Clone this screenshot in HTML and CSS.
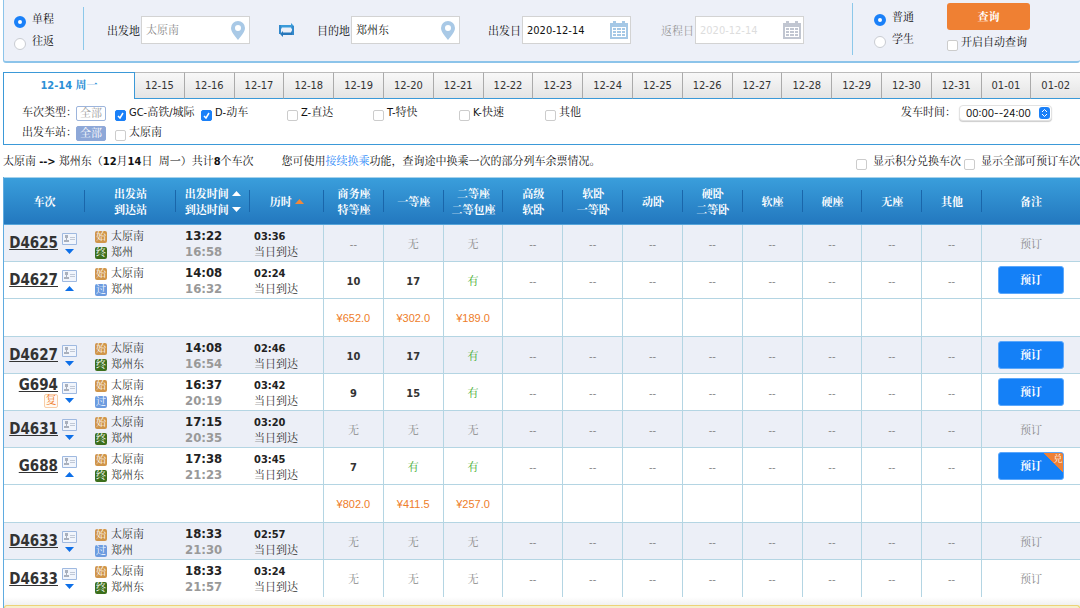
FILE: index.html
```html
<!DOCTYPE html>
<html lang="zh-CN">
<head>
<meta charset="utf-8">
<title>车票查询</title>
<link rel="stylesheet" href="styles.css">
</head>
<body>
<svg class="defs" aria-hidden="true">
  <symbol id="pin" viewBox="0 0 14 19"><path fill="#a9c9e6" fill-rule="evenodd" d="M7 0a7 7 0 0 1 7 7c0 4-4 8-7 12C4 15 0 11 0 7a7 7 0 0 1 7-7zm0 4a3 3 0 1 0 0 6 3 3 0 0 0 0-6z"/></symbol>
  <symbol id="calendar" viewBox="0 0 18 18"><path fill="currentColor" d="M0 2h3V0h3v2h6V0h3v2h3v16H0z"/><path fill="#fff" d="M2 6h14v10H2z"/><path fill="currentColor" d="M3 7h3v2H3zm4 0h4v2H7zm5 0h3v2h-3zM3 10h3v2H3zm4 0h4v2H7zm5 0h3v2h-3zM3 13h3v2H3zm4 0h4v2H7zm5 0h3v2h-3z"/></symbol>
  <symbol id="card" viewBox="0 0 15 12"><path fill="#f1f5fc" stroke="#9fb9e0" d="M.5.5h14v11H.5z"/><path fill="#a9b0bd" d="M3 2h3v3H5v2h2v2H2V7h2V5H3z"/><path fill="#c0c8d6" d="M8 4h5v1H8zm0 2h5v1H8z"/></symbol>
  <symbol id="down" viewBox="0 0 9 5"><path fill="currentColor" d="M0 0h9L4.500 5z"/></symbol>
  <symbol id="up" viewBox="0 0 9 5"><path fill="currentColor" d="M0 5h9L4.500 0z"/></symbol>
</svg>
<main class="page">
  <form class="search">
    <div class="radios">
      <label><input type="radio" name="trip" checked>单程</label>
      <label><input type="radio" name="trip">往返</label>
    </div>
    <div class="rule"></div>
    <div class="field from"><label for="from">出发地</label><span class="box"><input id="from" class="muted" type="text" value="太原南"><svg class="pin"><use href="#pin"/></svg></span></div>
    <button class="swap" type="button" aria-label="交换"><svg viewBox="0 0 16 14"><path fill="#3b9bd9" d="M0 8V2h12V0l3 3-3 3V4.500H3L1 8z"/><path fill="#2878bb" d="M15 5v7H4v2l-3-3 3-3v1.500h8L14 5z"/><path fill="#3288cb" d="M0 2h2v9H0zM13 3h2v9h-2z"/></svg></button>
    <div class="field"><label for="to">目的地</label><span class="box"><input id="to" type="text" value="郑州东"><svg class="pin"><use href="#pin"/></svg></span></div>
    <div class="field depart"><label for="date">出发日</label><span class="box"><input id="date" type="text" value="2020-12-14"><svg class="cal"><use href="#calendar"/></svg></span></div>
    <div class="field depart off"><label for="back">返程日</label><span class="box"><input id="back" type="text" value="2020-12-14" disabled><svg class="cal"><use href="#calendar"/></svg></span></div>
    <div class="rule tall"></div>
    <div class="radios kind">
      <label><input type="radio" name="kind" checked>普通</label>
      <label><input type="radio" name="kind">学生</label>
    </div>
    <div class="submit">
      <button type="button" class="query">查询</button>
      <label class="check"><input type="checkbox">开启自动查询</label>
    </div>
  </form>

  <nav class="tabs">
    <a class="current" href="#">12-14 周一</a>
    <a href="#">12-15</a><a href="#">12-16</a><a href="#">12-17</a><a href="#">12-18</a><a href="#">12-19</a><a href="#">12-20</a><a href="#">12-21</a><a href="#">12-22</a><a href="#">12-23</a><a href="#">12-24</a><a href="#">12-25</a><a href="#">12-26</a><a href="#">12-27</a><a href="#">12-28</a><a href="#">12-29</a><a href="#">12-30</a><a href="#">12-31</a><a href="#">01-01</a><a href="#">01-02</a>
  </nav>

  <section class="filters">
    <div class="filter-rows">
      <div class="filter"><span class="name">车次类型：</span><button type="button" class="all">全部</button>
        <div class="options">
          <label class="check"><input type="checkbox" checked>GC-高铁/城际</label>
          <label class="check"><input type="checkbox" checked>D-动车</label>
          <label class="check"><input type="checkbox">Z-直达</label>
          <label class="check"><input type="checkbox">T-特快</label>
          <label class="check"><input type="checkbox">K-快速</label>
          <label class="check"><input type="checkbox">其他</label>
        </div>
      </div>
      <div class="filter"><span class="name">出发车站：</span><button type="button" class="all on">全部</button>
        <div class="options"><label class="check"><input type="checkbox">太原南</label></div>
      </div>
    </div>
    <div class="when"><label for="when">发车时间：</label>
      <span class="picker"><select id="when"><option>00:00--24:00</option></select><svg viewBox="0 0 11 12"><rect width="11" height="12" rx="3" fill="#1a80f8"/><path d="M3 5l2.500-2.500L8 5M3 7l2.500 2.500L8 7" fill="none" stroke="#fff"/></svg></span>
    </div>
  </section>

  <div class="summary">
    <p>太原南 <b>--&gt;</b> 郑州东（<b>12</b>月<b>14</b>日&nbsp; 周一）共计<b>8</b>个车次</p>
    <p>您可使用<a href="#">接续换乘</a>功能，查询途中换乘一次的部分列车余票情况。</p>
    <div class="toggles">
      <label class="check"><input type="checkbox">显示积分兑换车次</label>
      <label class="check"><input type="checkbox">显示全部可预订车次</label>
    </div>
  </div>

  <table class="trains">
    <colgroup><col class="c-train"><col class="c-station"><col class="c-time"><col class="c-time"><col span="11"><col class="c-book"></colgroup>
    <thead>
      <tr>
        <th>车次</th><th>出发站<br>到达站</th>
        <th>出发时间 <svg class="sort"><use href="#up"/></svg><br>到达时间 <svg class="sort"><use href="#down"/></svg></th>
        <th>历时 <svg class="sort active"><use href="#up"/></svg></th>
        <th>商务座<br>特等座</th><th>一等座</th><th>二等座<br>二等包座</th><th>高级<br>软卧</th><th>软卧<br>一等卧</th><th>动卧</th><th>硬卧<br>二等卧</th><th>软座</th><th>硬座</th><th>无座</th><th>其他</th><th>备注</th>
      </tr>
    </thead>
    <tbody>
      <tr class="alt">
        <td><div class="train"><a href="#">D4625</a><span class="marks"><svg class="card"><use href="#card"/></svg><svg class="arrow"><use href="#down"/></svg></span></div></td>
        <td class="station"><div><i class="start">始</i>太原南</div><div><i class="end">终</i>郑州</div></td>
        <td class="time"><b>13:22</b><b class="arrive">16:58</b></td>
        <td class="span"><b>03:36</b><span>当日到达</span></td>
        <td>--</td><td>无</td><td>无</td><td>--</td><td>--</td><td>--</td><td>--</td><td>--</td><td>--</td><td>--</td><td>--</td><td>预订</td>
      </tr>
      <tr>
        <td><div class="train"><a href="#">D4627</a><span class="marks"><svg class="card"><use href="#card"/></svg><svg class="arrow"><use href="#up"/></svg></span></div></td>
        <td class="station"><div><i class="start">始</i>太原南</div><div><i class="pass">过</i>郑州</div></td>
        <td class="time"><b>14:08</b><b class="arrive">16:32</b></td>
        <td class="span"><b>02:24</b><span>当日到达</span></td>
        <td class="num">10</td><td class="num">17</td><td class="yes">有</td><td>--</td><td>--</td><td>--</td><td>--</td><td>--</td><td>--</td><td>--</td><td>--</td><td class="action"><button type="button" class="book">预订</button></td>
      </tr>
      <tr class="price">
        <td colspan="4"></td><td>¥652.0</td><td>¥302.0</td><td>¥189.0</td><td></td><td></td><td></td><td></td><td></td><td></td><td></td><td></td><td></td>
      </tr>
      <tr class="alt">
        <td><div class="train"><a href="#">D4627</a><span class="marks"><svg class="card"><use href="#card"/></svg><svg class="arrow"><use href="#down"/></svg></span></div></td>
        <td class="station"><div><i class="start">始</i>太原南</div><div><i class="end">终</i>郑州东</div></td>
        <td class="time"><b>14:08</b><b class="arrive">16:54</b></td>
        <td class="span"><b>02:46</b><span>当日到达</span></td>
        <td class="num">10</td><td class="num">17</td><td class="yes">有</td><td>--</td><td>--</td><td>--</td><td>--</td><td>--</td><td>--</td><td>--</td><td>--</td><td class="action"><button type="button" class="book">预订</button></td>
      </tr>
      <tr>
        <td><div class="train"><span class="named"><a href="#">G694</a><span class="fu">复</span></span><span class="marks"><svg class="card"><use href="#card"/></svg><svg class="arrow"><use href="#down"/></svg></span></div></td>
        <td class="station"><div><i class="start">始</i>太原南</div><div><i class="pass">过</i>郑州东</div></td>
        <td class="time"><b>16:37</b><b class="arrive">20:19</b></td>
        <td class="span"><b>03:42</b><span>当日到达</span></td>
        <td class="num">9</td><td class="num">15</td><td class="yes">有</td><td>--</td><td>--</td><td>--</td><td>--</td><td>--</td><td>--</td><td>--</td><td>--</td><td class="action"><button type="button" class="book">预订</button></td>
      </tr>
      <tr class="alt">
        <td><div class="train"><a href="#">D4631</a><span class="marks"><svg class="card"><use href="#card"/></svg><svg class="arrow"><use href="#down"/></svg></span></div></td>
        <td class="station"><div><i class="start">始</i>太原南</div><div><i class="end">终</i>郑州</div></td>
        <td class="time"><b>17:15</b><b class="arrive">20:35</b></td>
        <td class="span"><b>03:20</b><span>当日到达</span></td>
        <td>无</td><td>无</td><td>无</td><td>--</td><td>--</td><td>--</td><td>--</td><td>--</td><td>--</td><td>--</td><td>--</td><td>预订</td>
      </tr>
      <tr>
        <td><div class="train"><a href="#">G688</a><span class="marks"><svg class="card"><use href="#card"/></svg><svg class="arrow"><use href="#up"/></svg></span></div></td>
        <td class="station"><div><i class="start">始</i>太原南</div><div><i class="end">终</i>郑州东</div></td>
        <td class="time"><b>17:38</b><b class="arrive">21:23</b></td>
        <td class="span"><b>03:45</b><span>当日到达</span></td>
        <td class="num">7</td><td class="yes">有</td><td class="yes">有</td><td>--</td><td>--</td><td>--</td><td>--</td><td>--</td><td>--</td><td>--</td><td>--</td><td class="action"><button type="button" class="book">预订<span class="corner">兑</span></button></td>
      </tr>
      <tr class="price">
        <td colspan="4"></td><td>¥802.0</td><td>¥411.5</td><td>¥257.0</td><td></td><td></td><td></td><td></td><td></td><td></td><td></td><td></td><td></td>
      </tr>
      <tr class="alt">
        <td><div class="train"><a href="#">D4633</a><span class="marks"><svg class="card"><use href="#card"/></svg><svg class="arrow"><use href="#down"/></svg></span></div></td>
        <td class="station"><div><i class="start">始</i>太原南</div><div><i class="pass">过</i>郑州</div></td>
        <td class="time"><b>18:33</b><b class="arrive">21:30</b></td>
        <td class="span"><b>02:57</b><span>当日到达</span></td>
        <td>无</td><td>无</td><td>无</td><td>--</td><td>--</td><td>--</td><td>--</td><td>--</td><td>--</td><td>--</td><td>--</td><td>预订</td>
      </tr>
      <tr class="last">
        <td><div class="train"><a href="#">D4633</a><span class="marks"><svg class="card"><use href="#card"/></svg><svg class="arrow"><use href="#down"/></svg></span></div></td>
        <td class="station"><div><i class="start">始</i>太原南</div><div><i class="end">终</i>郑州东</div></td>
        <td class="time"><b>18:33</b><b class="arrive">21:57</b></td>
        <td class="span"><b>03:24</b><span>当日到达</span></td>
        <td>无</td><td>无</td><td>无</td><td>--</td><td>--</td><td>--</td><td>--</td><td>--</td><td>--</td><td>--</td><td>--</td><td>预订</td>
      </tr>
    </tbody>
  </table>
  <footer class="foot"><div class="notice"></div></footer>
</main>
</body>
</html>
```
FILE: styles.css
```css
* { box-sizing: border-box; }
body {
  margin: 0;
  background: #fff;
  color: #111;
  font: 11px/16px "DejaVu Sans Condensed", "Noto Serif CJK SC", "Noto Sans CJK SC", sans-serif;
}
button, input, select { font: inherit; color: inherit; margin: 0; }
button { padding: 0; border: 0; cursor: pointer; }
a { color: inherit; text-decoration: none; }
p { margin: 0; }
.defs { display: none; }
.page { display: flex; flex-direction: column; min-height: 100vh; margin-left: 3px; white-space: nowrap; }

/* search form */
.search {
  display: flex;
  height: 63px;
  padding-left: 10px;
  border: 1px solid #8cc4ea;
  border-width: 0 0 2px 1px;
  border-radius: 0 0 3px 3px;
  background: #edf0f8;
}
.radios { display: flex; flex-direction: column; gap: 6px; padding-top: 12px; width: 69px; }
.radios label { display: flex; align-items: center; gap: 6px; }
.radios input {
  appearance: none;
  width: 12px;
  height: 12px;
  margin-top: 3px;
  border: 1px solid #c9ccd2;
  border-radius: 50%;
  background: #fff;
}
.radios input:checked { border: 4px solid #1a80f8; }
.radios.kind { width: 73px; margin-left: 21px; padding-top: 10px; }
.rule { width: 1px; height: 43px; margin-top: 7px; background: #8cc8ea; }
.rule.tall { height: 52px; margin-top: 3px; margin-left: 48px; }
.field { display: flex; align-items: center; gap: 1px; height: 28px; margin-top: 16px; }
.field label { padding-top: 3px; }
.field.from { margin-left: 23px; }
.field.depart { margin-left: 28px; }
.field.off { margin-left: 30px; }
.box {
  display: flex;
  align-items: center;
  width: 109px;
  height: 28px;
  padding: 0 4px;
  border: 1px solid #d3d3d3;
  background: #fff;
}
.box input { flex: 1; min-width: 0; width: 0; padding: 2px 0 0; border: 0; background: none; outline: 0; }
.box .muted { color: #888; }
.pin { width: 14px; height: 19px; }
.cal { width: 18px; height: 18px; color: #a5c8e6; margin-right: -2px; }
.off { color: #999; }
.off input { color: #ddd; }
.off .cal { color: #c1c6d1; }
.swap { width: 16px; height: 28px; margin: 16px 22px 0 29px; background: none; }
.swap svg { display: block; width: 16px; height: 14px; margin: auto; }
.submit { display: flex; flex-direction: column; gap: 5px; padding-top: 3px; }
.query { width: 83px; height: 27px; padding-top: 2px; border-radius: 3px; background: #ef8033; color: #fff; font-weight: bold; }

.check { display: flex; align-items: center; gap: 3px; }
.check input {
  appearance: none;
  flex: none;
  width: 11px;
  height: 11px;
  margin-top: 4px;
  border: 1px solid #ccc;
  border-radius: 2px;
  background: #fff;
}
.check input:checked {
  border-color: #1a80f8;
  background: #1a80f8 url("data:image/svg+xml,%3Csvg xmlns='http://www.w3.org/2000/svg' viewBox='0 0 9 9'%3E%3Cpath d='M2 5l2 2 3-5' fill='none' stroke='white' stroke-width='1.500'/%3E%3C/svg%3E");
}

/* date tabs */
.tabs { display: flex; height: 27px; margin-top: 9px; }
.tabs a {
  flex: 1 1 0;
  min-width: 0;
  padding-top: 5px;
  border: 1px solid #aaa;
  border-width: 1px 0 1px 1px;
  border-top-color: #bbb;
  border-bottom-color: #3b99d8;
  background: linear-gradient(#f8f8f8, #e4e4e4);
  text-align: center;
  color: #333;
}
.tabs .current {
  flex: 0 0 132px;
  border-width: 1px 1px 0 1px;
  border-color: #3b99d8;
  background: #fff;
  color: #2b8fd6;
  font-weight: bold;
}
.tabs .current + a { border-left: 0; }

/* filters */
.filters {
  display: flex;
  justify-content: space-between;
  height: 46px;
  padding: 6px 28px 0 18px;
  border: 1px solid #3b99d8;
  border-width: 0 0 1px 1px;
}
.filter-rows { display: flex; flex-direction: column; gap: 4px; }
.filter { display: flex; align-items: center; height: 16px; }
.name { width: 54px; }
.all {
  width: 30px;
  height: 15px;
  border: 1px solid #9db5dc;
  border-radius: 2px;
  background: #fff;
  color: #999;
  line-height: 13px;
}
.all.on { background: #8ea8d8; border-color: #8ea8d8; color: #fff; }
.options { display: grid; grid-template-columns: repeat(6, 86px); margin-left: 9px; }
.when { display: flex; align-items: center; height: 16px; gap: 3px; }
.picker { position: relative; }
.picker select {
  appearance: none;
  display: block;
  width: 93px;
  height: 16px;
  padding: 0 6px;
  border: 1px solid #e2e2e2;
  border-radius: 4px;
  background: #fff;
  box-shadow: 0 1px 1px #ccc;
  font: 10px/14px "Inter", sans-serif;
}
.picker svg { position: absolute; right: 2px; top: 2px; width: 11px; height: 12px; pointer-events: none; }

/* result summary */
.summary { display: flex; align-items: center; height: 32px; padding-top: 2px; gap: 28px; }
.summary a { color: #1f86f8; }
.toggles { display: flex; gap: 3px; margin-left: auto; }
.toggles .check { gap: 6px; }

/* train table */
.trains { width: 100%; table-layout: fixed; border-collapse: separate; border-spacing: 0; border-left: 1px solid #5fabe0; }
.c-train { width: 81px; }
.c-station { width: 91px; }
.c-time { width: 74px; }
.c-book { width: 98px; }
.trains thead { background: linear-gradient(#3a9fdc, #2277be); color: #fff; }
.trains th {
  height: 48px;
  padding: 4px 0 0;
  border-top: 1px solid #a5d2ec;
  border-bottom: 1px solid #57a5da;
  background: linear-gradient(#1a66aa, #1a66aa) right center / 1px 22px no-repeat;
}
.trains th:last-child { background: none; }
.sort { width: 9px; height: 5px; vertical-align: 2px; }
.sort.active { color: #f0893a; }
.trains td {
  height: 37px;
  padding: 3px 0 0;
  border-right: 1px solid #b4d5e3;
  border-bottom: 1px solid #b4d5e3;
  text-align: center;
  color: #888;
}
.trains td:nth-child(-n+3), .trains td:last-child { border-right: 0; }
.trains .action { padding-top: 0; }
.trains .price td:nth-child(-n+3) { border-right: 1px solid #b4d5e3; }
.trains .price td { height: 38px; padding-top: 0; color: #ee7d29; font-family: "Liberation Sans", sans-serif; }
.alt { background: #eceff7; }
.trains .last td { border-bottom: 0; }
.trains .num { color: #333; font-weight: bold; }
.trains .yes { color: #3fab2c; }

.train { display: grid; grid-template-columns: 54px 15px; gap: 4px; align-items: center; }
.train a { color: #333; font-size: 15px; line-height: 18px; font-weight: bold; text-decoration: underline; text-align: right; }
.named { display: flex; flex-direction: column; align-items: flex-end; }
.fu { width: 14px; height: 14px; border: 1px solid #f8cda8; border-radius: 2px; background: #fffaf4; color: #ef7d2b; line-height: 12px; }
.marks { display: flex; flex-direction: column; align-items: center; gap: 4px; }
.card { width: 15px; height: 12px; }
.arrow { width: 9px; height: 5px; color: #0d6fe8; }
.trains td:first-child { padding-top: 0; }
.trains .station, .trains .time, .trains .span { text-align: left; color: #333; }
.trains .station { padding-left: 10px; }
.trains .time { padding: 1px 0 0 9px; }
.trains .span { padding-left: 4px; }
.station div { display: flex; align-items: center; gap: 4px; }
.station i { width: 12px; height: 12px; border-radius: 2px; color: #fff; font-style: normal; font-size: 10px; line-height: 12px; text-align: center; }
.start { background: #d0954a; }
.end { background: #3c6f1c; }
.pass { background: #6c9bdf; }
.time b, .span b, .span span { display: block; }
.time b { font-size: 13px; color: #222; }
.time .arrive { color: #999; }
.span b { color: #222; }
.book {
  position: relative;
  width: 66px;
  height: 28px;
  padding-top: 2px;
  border: 1px solid #5ba7fb;
  border-radius: 3px;
  background: #1480f7;
  color: #fff;
  font-weight: bold;
  overflow: hidden;
}
.corner {
  position: absolute;
  top: 0;
  right: 0;
  width: 20px;
  height: 20px;
  padding-left: 10px;
  background: linear-gradient(45deg, transparent 50%, #ee8035 50%);
  font-size: 9px;
  line-height: 12px;
  font-weight: normal;
}

.foot { display: flex; flex: 1; padding-top: 8px; border-left: 1px solid #5fabe0; background: linear-gradient(#fff, #f1f1f1 8px); }
.notice { flex: 1; border: 1px solid #ecd377; border-bottom: 0; border-radius: 4px 4px 0 0; background: #f6efcf; }
```
